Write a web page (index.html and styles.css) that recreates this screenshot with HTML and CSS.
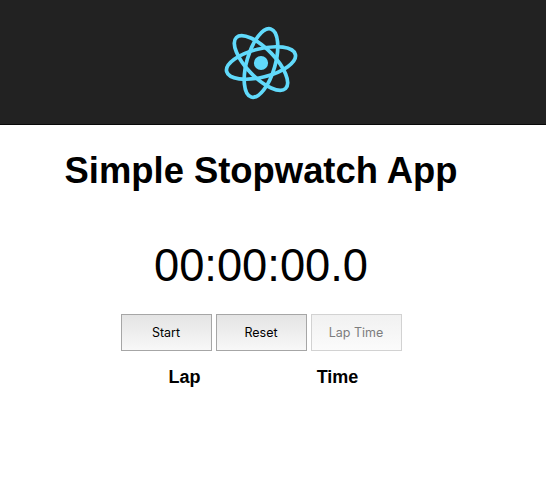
FILE: index.html
```html
<!DOCTYPE html>
<html lang="en">
<head>
<meta charset="utf-8">
<title>Simple Stopwatch App</title>
<link rel="stylesheet" href="styles.css">
</head>
<body>
<div class="app">
<header class="header">
<svg class="logo" viewBox="-38 -38 76 76">
<g fill="none" stroke="#61dafb" stroke-width="3.7" transform="rotate(-14)">
<ellipse rx="35.4" ry="14.2"/>
<ellipse rx="35.4" ry="14.2" transform="rotate(60)"/>
<ellipse rx="35.4" ry="14.2" transform="rotate(120)"/>
</g>
<circle r="7.1" fill="#61dafb"/>
</svg>
</header>
<main class="main">
<h1 class="title">Simple Stopwatch App</h1>
<div class="clock">00:00:00.0</div>
<div class="controls">
<button class="button">Start</button>
<button class="button">Reset</button>
<button class="button" disabled>Lap Time</button>
</div>
<div class="laps"><strong>Lap</strong><strong>Time</strong></div>
</main>
</div>
</body>
</html>
```
FILE: styles.css
```css
body {
  margin: 0;
  background: #fff;
  color: #000;
  font-family: "Liberation Sans", Arial, sans-serif;
}
.app {
  width: 522px;
}
.header {
  box-sizing: border-box;
  display: flex;
  width: 546px;
  height: 125px;
  border-bottom: 1px solid #080808;
  background: #222;
}
.logo {
  width: 76px;
  height: 76px;
  margin: 25.4px 0 0 223.3px;
}
.main {
  display: flex;
  flex-direction: column;
  align-items: center;
}
.title {
  margin: 24px 0 0;
  font-size: 36.4px;
  line-height: 44px;
  white-space: nowrap;
}
.clock {
  margin-top: 47px;
  font-size: 45.3px;
  line-height: 52px;
}
.controls {
  display: flex;
  gap: 4px;
  margin-top: 22px;
}
.button {
  box-sizing: border-box;
  width: 91px;
  height: 37px;
  padding: 0;
  border: 1px solid #a6a6a6;
  background: linear-gradient(#e4e4e4, #f8f8f8);
  color: #000;
  font: 12.5px Inter, sans-serif;
}
.button:disabled {
  border-color: #d2d2d2;
  background: linear-gradient(#f1f1f1, #fbfbfb);
  color: #7d7d7d;
}
.laps {
  display: grid;
  grid-template-columns: 153px 153px;
  margin-top: 15px;
  text-align: center;
  font-size: 18px;
  line-height: 22px;
}
```
